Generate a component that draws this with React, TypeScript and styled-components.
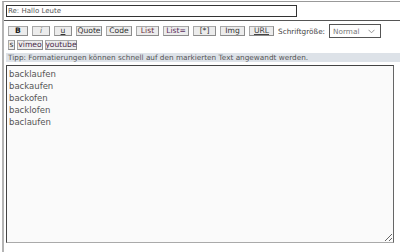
import React from "react";
import styled, { createGlobalStyle } from "styled-components";

const Global = createGlobalStyle`
  html, body { margin: 0; padding: 0; background: #fff; }
  body { font-family: "DejaVu Sans", Verdana, sans-serif; }
`;

const Frame = styled.div`
  margin: 1px 0 0 2px;
  border-top: 1px solid #999;
  border-left: 2px solid #b4b4b4;
  height: 251px;
  box-sizing: border-box;
`;

const SubjectRow = styled.div`
  padding: 3px 0 3px 2px;
  border-bottom: 1px solid #555;
`;

const SubjectInput = styled.input`
  display: block;
  box-sizing: border-box;
  width: 291px;
  height: 12px;
  margin: 0;
  padding: 0 1px;
  border: 1px solid #333;
  font-family: "DejaVu Sans", Verdana, sans-serif;
  font-size: 7px;
  line-height: 10px;
  color: #555;
  background: #fff;
  outline: none;
`;

const Body = styled.div`
  padding-left: 2px;
`;

const ButtonRow = styled.div<{ $gap: number; $top: number; $h: number }>`
  display: flex;
  align-items: center;
  gap: ${(p) => p.$gap}px;
  padding-left: 2px;
  margin-top: ${(p) => p.$top}px;
  height: ${(p) => p.$h}px;
`;

const BBButton = styled.button<{
  $w?: number;
  $color?: string;
  $bold?: boolean;
  $italic?: boolean;
  $under?: boolean;
}>`
  box-sizing: border-box;
  ${(p) => (p.$w ? `width: ${p.$w}px;` : "")}
  height: 10px;
  margin: 0;
  padding: 0;
  border: 1px solid #a8a8a8;
  border-right-color: #8c8c8c;
  border-bottom-color: #8c8c8c;
  background: #ececec;
  font-family: "DejaVu Sans", Verdana, sans-serif;
  font-size: 7.6px;
  line-height: 8px;
  color: ${(p) => p.$color || "#333"};
  font-weight: ${(p) => (p.$bold ? 700 : 400)};
  font-style: ${(p) => (p.$italic ? "italic" : "normal")};
  text-decoration: ${(p) => (p.$under ? "underline" : "none")};
  display: flex;
  align-items: center;
  justify-content: center;
  white-space: nowrap;
`;

const Label = styled.span`
  font-size: 7.3px;
  color: #444;
  white-space: nowrap;
`;

const SelectWrap = styled.div`
  position: relative;
  box-sizing: border-box;
  width: 52px;
  height: 14px;
  border: 1px solid #555;
  background: #fff;
  display: flex;
  align-items: center;
  padding-left: 3px;
  font-size: 7.3px;
  color: #777;
`;

const Chevron = styled.svg`
  position: absolute;
  right: 5px;
  top: 4px;
`;

const Tip = styled.div`
  margin-top: 3px;
  height: 9px;
  line-height: 9px;
  background: #dde2e8;
  padding-left: 2px;
  font-size: 7.3px;
  color: #555;
  white-space: nowrap;
  overflow: hidden;
`;

const Editor = styled.textarea`
  display: block;
  box-sizing: border-box;
  margin: 3px 0 0 0;
  width: 388px;
  height: 178px;
  padding: 2px 2px;
  border: 1px solid #444;
  border-right-color: #666;
  border-bottom-color: #aaa;
  background: #fafafa;
  font-family: "DejaVu Sans", Verdana, sans-serif;
  font-size: 8.5px;
  line-height: 12px;
  color: #555;
  outline: none;
`;

type Btn = {
  t: string;
  w?: number;
  color?: string;
  bold?: boolean;
  italic?: boolean;
  under?: boolean;
};

const row1: Btn[] = [
  { t: "B", w: 20, bold: true, color: "#222" },
  { t: "i", w: 18, italic: true, color: "#666" },
  { t: "u", w: 18, under: true, color: "#333" },
  { t: "Quote", w: 26 },
  { t: "Code", w: 26 },
  { t: "List", w: 23, color: "#6b2c3c" },
  { t: "List=", w: 26, color: "#5b3060" },
  { t: "[*]", w: 23 },
  { t: "Img", w: 25 },
  { t: "URL", w: 25, under: true, color: "#444" },
];

const row2: Btn[] = [
  { t: "s", w: 7 },
  { t: "vimeo", w: 26, color: "#4a2a4a" },
  { t: "youtube", w: 32, color: "#4a2a4a" },
];

const text = ["backlaufen", "backaufen", "backofen", "backlofen", "baclaufen"].join("\n");

export default function App() {
  return (
    <>
      <Global />
      <Frame>
        <SubjectRow>
          <SubjectInput defaultValue="Re: Hallo Leute" />
        </SubjectRow>
        <Body>
          <ButtonRow $gap={4} $top={3} $h={14}>
            {row1.map((b) => (
              <BBButton
                key={b.t}
                $w={b.w}
                $color={b.color}
                $bold={b.bold}
                $italic={b.italic}
                $under={b.under}
              >
                {b.t}
              </BBButton>
            ))}
            <Label>Schriftgröße:</Label>
            <SelectWrap>
              Normal
              <Chevron width="7" height="5" viewBox="0 0 7 5">
                <path d="M0.5 0.8 L3.5 3.8 L6.5 0.8" fill="none" stroke="#888" strokeWidth="0.9" />
              </Chevron>
            </SelectWrap>
          </ButtonRow>
          <ButtonRow $gap={2} $top={2} $h={10}>
            {row2.map((b) => (
              <BBButton key={b.t} $w={b.w} $color={b.color}>
                {b.t}
              </BBButton>
            ))}
          </ButtonRow>
          <Tip>Tipp: Formatierungen können schnell auf den markierten Text angewandt werden.</Tip>
          <Editor defaultValue={text} spellCheck={false} />
        </Body>
      </Frame>
    </>
  );
}
